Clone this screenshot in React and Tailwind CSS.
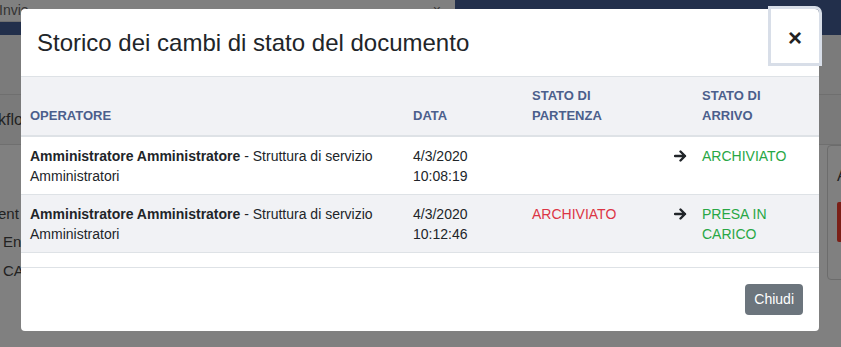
import React from 'react';

const rows = [
  { name: 'Amministratore Amministratore', unit: 'Struttura di servizio Amministratori', date: '4/3/2020', time: '10:08:19', from: '', to: 'ARCHIVIATO', bg: 'bg-white' },
  { name: 'Amministratore Amministratore', unit: 'Struttura di servizio Amministratori', date: '4/3/2020', time: '10:12:46', from: 'ARCHIVIATO', to: 'PRESA IN CARICO', bg: 'bg-[#f1f2f5]' },
];

const cols = 'grid grid-cols-[383px_119px_142px_28px_126px]';

function Arrow() {
  return (
    <svg width="13" height="12" viewBox="0 0 13 12" className="mt-[4px]">
      <path d="M1 6h10M6.5 1.5 11 6l-4.5 4.5" fill="none" stroke="#212529" strokeWidth="2.4" strokeLinecap="round" strokeLinejoin="round" />
    </svg>
  );
}

export default function App() {
  return (
    <div className="relative w-[841px] h-[347px] overflow-hidden bg-[#808080] font-['Liberation_Sans',sans-serif]">
      {/* dimmed page behind the dialog */}
      <div className="flex h-[22px]">
        <div className="flex w-[455px] items-center border-b border-[#707070] bg-[#808080]">
          <span className="ml-[-1px] text-[14px] text-[#333]">Invio</span>
          <span className="ml-auto mr-[14px] text-[14px] text-[#333]">×</span>
        </div>
        <div className="flex-1 bg-[#222f4b]" />
      </div>
      <div className="h-[13px] bg-[#222f4b]" />
      <div className="h-[60px] border-b border-[#6f6f6f] bg-[#7b7b7b]" />
      <div className="flex h-[50px] items-center border-b border-[#6f6f6f] bg-[#7a7a7a]">
        <span className="ml-[-31px] text-[16px] text-[#222]">Workflow</span>
      </div>
      <div className="flex">
        <div className="flex w-[60px] flex-col pt-[55px] text-[15px] text-[#222]">
          <span className="ml-[-2px] leading-[28px]">ent</span>
          <span className="ml-[3px] leading-[28px]">Ent</span>
          <span className="ml-[3px] leading-[30px]">CA</span>
        </div>
        <div className="ml-auto mr-[-10px] h-[135px] w-[24px] rounded-[4px] border border-[#6c6c6c] pl-[9px] pt-[18px]">
          <div className="text-[16px] text-[#222]">A</div>
          <div className="mt-[14px] h-[40px] w-[12px] rounded-[2px] bg-[#7b1f17]" />
        </div>
      </div>

      {/* dialog */}
      <div className="absolute left-[21px] top-[9px] w-[798px] rounded-[4px] bg-white text-[#212529]">
        <div className="flex h-[68px] items-start border-b border-[#dee2e6]">
          <h5 className="pl-[16px] pt-[19px] text-[24px] leading-[29px] text-[#212529]">
            Storico dei cambi di stato del documento
          </h5>
          <button className="ml-auto flex h-[54px] w-[48px] items-center justify-center rounded-tr-[4px] pt-[3px] text-[24px] font-bold leading-none text-[#222] outline outline-[3px] outline-[#d8dee8]">
            ×
          </button>
        </div>

        <div className="pb-[14px]">
          <div className={`${cols} h-[60px] items-end border-b-2 border-[#dee2e6] bg-[#f1f2f5] text-[13px] font-bold leading-[20px] text-[#4b5f8c]`}>
            <div className="px-[9px] pb-[9px]">OPERATORE</div>
            <div className="px-[9px] pb-[9px]">DATA</div>
            <div className="px-[9px] pb-[9px]">STATO DI<br />PARTENZA</div>
            <div />
            <div className="px-[9px] pb-[9px]">STATO DI<br />ARRIVO</div>
          </div>
          {rows.map((r, i) => (
            <div key={i} className={`${cols} ${r.bg} border-b border-[#dee2e6] text-[14px] leading-[20px]`}>
              <div className="px-[9px] pb-[8px] pt-[9px]">
                <b>{r.name}</b> - {r.unit}
              </div>
              <div className="px-[9px] pb-[8px] pt-[9px]">
                {r.date}<br />{r.time}
              </div>
              <div className="px-[9px] pb-[8px] pt-[9px] text-[#dc3545]">{r.from}</div>
              <div className="pb-[8px] pl-[9px] pt-[9px]"><Arrow /></div>
              <div className="px-[9px] pb-[8px] pt-[9px] text-[#28a745]">{r.to}</div>
            </div>
          ))}
        </div>

        <div className="flex justify-end border-t border-[#dee2e6] p-[16px]">
          <button className="h-[31px] rounded-[4px] bg-[#6c757d] px-[9px] text-[14px] text-white">Chiudi</button>
        </div>
      </div>
    </div>
  );
}
